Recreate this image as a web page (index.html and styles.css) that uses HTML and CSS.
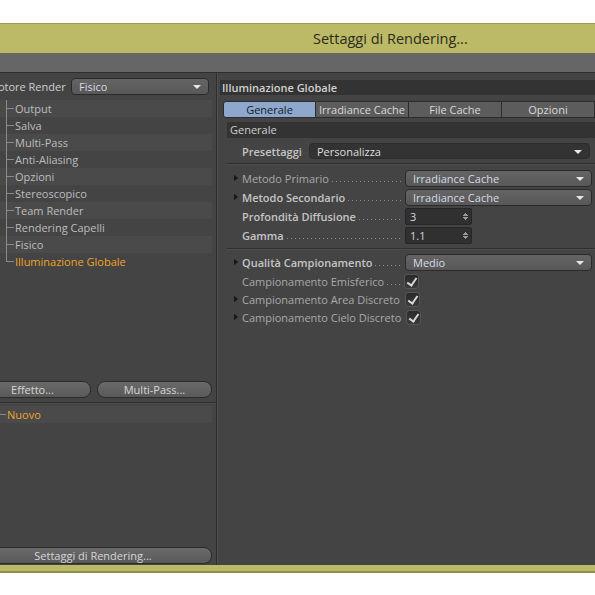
FILE: index.html
```html
<!DOCTYPE html>
<html lang="it">
<head>
    <meta charset="UTF-8">
    <title>Settaggi di Rendering</title>
    <link rel="stylesheet" href="styles.css">
</head>
<body>
    <div class="window">
        <div class="titlebar">Settaggi di Rendering...</div>
        <div class="menubar"></div>

        <div class="main">
            <!-- left column: renderer + settings tree -->
            <div class="side">
                <div class="renderer-row">
                    <span class="renderer-label">Motore Render</span>
                    <div class="dropdown dropdown-wide">Fisico</div>
                </div>

                <ul class="tree">
                    <li>Output</li>
                    <li>Salva</li>
                    <li>Multi-Pass</li>
                    <li>Anti-Aliasing</li>
                    <li>Opzioni</li>
                    <li>Stereoscopico</li>
                    <li>Team Render</li>
                    <li>Rendering Capelli</li>
                    <li>Fisico</li>
                    <li class="active last">Illuminazione Globale</li>
                </ul>

                <div class="button-row">
                    <button class="btn btn-effect">Effetto...</button>
                    <button class="btn btn-pass">Multi-Pass...</button>
                </div>

                <ul class="presets">
                    <li class="active">Nuovo</li>
                </ul>

                <button class="btn btn-full">Settaggi di Rendering...</button>
            </div>

            <!-- right column: global illumination attributes -->
            <div class="content">
                <div class="panel-title">Illuminazione Globale</div>

                <div class="tabs">
                    <div class="tab selected">Generale</div>
                    <div class="tab">Irradiance Cache</div>
                    <div class="tab">File Cache</div>
                    <div class="tab">Opzioni</div>
                </div>

                <div class="group-title">Generale</div>

                <div class="param preset-row">
                    <span class="label strong">Presettaggi</span>
                    <div class="dropdown dropdown-dark">Personalizza</div>
                </div>

                <div class="section">
                    <div class="param">
                        <span class="twist"></span>
                        <span class="label">Metodo Primario</span>
                        <span class="leader"></span>
                        <div class="control"><div class="dropdown">Irradiance Cache</div></div>
                    </div>
                    <div class="param">
                        <span class="twist"></span>
                        <span class="label strong">Metodo Secondario</span>
                        <span class="leader"></span>
                        <div class="control"><div class="dropdown">Irradiance Cache</div></div>
                    </div>
                    <div class="param">
                        <span class="label strong">Profondità Diffusione</span>
                        <span class="leader"></span>
                        <div class="control"><div class="number">3<span class="spin"></span></div></div>
                    </div>
                    <div class="param">
                        <span class="label strong">Gamma</span>
                        <span class="leader"></span>
                        <div class="control"><div class="number">1.1<span class="spin"></span></div></div>
                    </div>
                </div>

                <div class="section">
                    <div class="param">
                        <span class="twist"></span>
                        <span class="label strong">Qualità Campionamento</span>
                        <span class="leader"></span>
                        <div class="control"><div class="dropdown">Medio</div></div>
                    </div>
                    <div class="param param-check">
                        <span class="label">Campionamento Emisferico</span>
                        <span class="leader"></span>
                        <div class="control"><span class="check"></span></div>
                    </div>
                    <div class="param param-check">
                        <span class="twist"></span>
                        <span class="label">Campionamento Area Discreto</span>
                        <span class="leader"></span>
                        <div class="control"><span class="check"></span></div>
                    </div>
                    <div class="param param-check">
                        <span class="twist"></span>
                        <span class="label">Campionamento Cielo Discreto</span>
                        <span class="leader"></span>
                        <div class="control"><span class="check"></span></div>
                    </div>
                </div>
            </div>
        </div>

        <div class="bottom-edge"></div>
    </div>
</body>
</html>
```

FILE: styles.css
```css
body {
    margin: 0;
    background: #fff;
    overflow: hidden;
    font-family: "Open Sans", "Noto Sans", sans-serif;
    font-size: 11px;
}

.window {
    margin-top: 23px;
    margin-left: -12px;
    width: 607px;
}

.titlebar {
    height: 29px;
    background: #bcb967;
    border-top: 1px solid #9c9a56;
    padding-left: 325px;
    line-height: 29px;
    font-size: 14.5px;
    color: #2b2b1c;
}

.menubar {
    height: 19px;
    background: #666;
    border-bottom: 1px solid #2e2e2e;
}

.main {
    display: flex;
    height: 492px;
    background: #444;
}

.bottom-edge {
    height: 6px;
    background: #bcb967;
    border-bottom: 2px solid #8e8c48;
}

/* ---- left column ---- */

.side {
    width: 228px;
    flex: 0 0 228px;
    display: flex;
    flex-direction: column;
    padding-top: 5px;
    border-right: 1px solid #2e2e2e;
    box-shadow: 1px 0 0 #505050;
}

.renderer-row {
    display: flex;
    align-items: center;
    height: 17px;
}

.renderer-label {
    width: 82px;
    color: #cfcfcf;
}

.tree,
.presets {
    list-style: none;
    margin: 0;
    padding: 0;
}

.tree {
    margin-top: 5px;
    flex: 1;
}

.tree li,
.presets li {
    position: relative;
    height: 17px;
    line-height: 17px;
    width: 224px;
    padding-left: 27px;
    box-sizing: border-box;
    color: #bdbdbd;
}

.tree li:nth-child(odd),
.presets li {
    background: #4a4a4a;
}

/* tree connector lines */
.tree li::before {
    content: "";
    position: absolute;
    left: 18px;
    top: 0;
    width: 8px;
    height: 17px;
    border-left: 1px solid #8a8a8a;
    box-sizing: border-box;
    background: linear-gradient(#8a8a8a, #8a8a8a) no-repeat 0 8px / 8px 1px;
}

.tree li.last::before {
    height: 9px;
    background: none;
    border-bottom: 1px solid #8a8a8a;
}

.tree li.active,
.presets li.active {
    color: #f0a22a;
}

.presets {
    flex: 0 0 141px;
    box-sizing: border-box;
    padding-top: 3px;
    border-top: 1px solid #2e2e2e;
    box-shadow: inset 0 1px 0 #4c4c4c;
}

.presets li {
    padding-left: 19px;
}

.presets li::before {
    content: "";
    position: absolute;
    left: 0;
    top: 8px;
    width: 18px;
    height: 1px;
    background: #8a8a8a;
}

.button-row {
    display: flex;
    gap: 6px;
    margin-left: -14px;
    margin-bottom: 4px;
}

.btn {
    height: 17px;
    padding: 0;
    border: 1px solid #2b2b2b;
    border-radius: 8px;
    background: linear-gradient(#6a6a6a, #595959);
    color: #d6d6d6;
    font-family: inherit;
    font-size: 11px;
    line-height: 14px;
}

.btn-effect {
    width: 117px;
}

.btn-pass {
    width: 115px;
}

.btn-full {
    width: 238px;
    margin: 4px 0 1px -14px;
}

/* ---- dropdowns and fields ---- */

.dropdown {
    position: relative;
    height: 17px;
    line-height: 15px;
    padding-left: 7px;
    border: 1px solid #2a2a2a;
    border-radius: 4px;
    background: linear-gradient(#646464, #585858);
    color: #d5dbe6;
    box-sizing: border-box;
    flex: 1;
}

.dropdown::after {
    content: "";
    position: absolute;
    right: 7px;
    top: 6px;
    border-left: 4px solid transparent;
    border-right: 4px solid transparent;
    border-top: 4px solid #e8e8e8;
}

.dropdown-wide {
    flex: 0 0 138px;
    margin-left: 1px;
}

.dropdown-dark {
    height: 16px;
    background: #333;
    border-color: #2c2c2c;
    color: #dedede;
}

.control {
    flex: 0 0 187px;
    display: flex;
    align-items: center;
}

.number {
    position: relative;
    width: 67px;
    height: 17px;
    line-height: 16px;
    padding-left: 4px;
    box-sizing: border-box;
    background: #303030;
    border: 1px solid #262626;
    border-radius: 2px;
    color: #cfd6e2;
}

.spin {
    position: absolute;
    right: 3px;
    top: 3px;
    width: 5px;
    height: 9px;
    background:
        linear-gradient(to bottom right, transparent 50%, #9a9a9a 50%) no-repeat 0 0 / 3px 4px,
        linear-gradient(to bottom left, transparent 50%, #9a9a9a 50%) no-repeat 2px 0 / 3px 4px,
        linear-gradient(to top right, transparent 50%, #9a9a9a 50%) no-repeat 0 5px / 3px 4px,
        linear-gradient(to top left, transparent 50%, #9a9a9a 50%) no-repeat 2px 5px / 3px 4px;
}

.check {
    position: relative;
    width: 13px;
    height: 13px;
    border-radius: 3px;
    background: linear-gradient(#2a2a2a, #3a3a3a);
    box-shadow: 0 0 0 1px #555;
}

.check::after {
    content: "";
    position: absolute;
    left: 4px;
    top: 1px;
    width: 4px;
    height: 8px;
    border-right: 2px solid #d8d8d8;
    border-bottom: 2px solid #d8d8d8;
    transform: rotate(35deg);
}

/* ---- right column ---- */

.content {
    flex: 1;
    min-width: 0;
    overflow: hidden;
    padding-top: 7px;
    padding-left: 3px;
}

.panel-title {
    height: 15px;
    line-height: 15px;
    padding-left: 2px;
    background: #333;
    color: #d2d2d2;
    font-weight: 600;
}

.tabs {
    display: flex;
    margin: 6px 0 0 3px;
}

.tab {
    width: 93px;
    height: 17px;
    line-height: 16px;
    text-align: center;
    box-sizing: border-box;
    border: 1px solid #2c2c2c;
    border-left: none;
    background: #5c5c5c;
    color: #d8d8d8;
}

.tab.selected {
    border-left: 1px solid #2c2c2c;
    border-radius: 3px 0 0 3px;
    background: #8ea7cd;
    color: #16191f;
}

.group-title {
    height: 16px;
    line-height: 16px;
    margin: 4px 0 0 7px;
    padding-left: 3px;
    background: #333;
    color: #cfcfcf;
}

.param {
    position: relative;
    display: flex;
    align-items: center;
    height: 19px;
    padding-left: 22px;
    padding-right: 3px;
}

.preset-row {
    height: 16px;
    margin-top: 5px;
    padding-right: 5px;
}

.preset-row .label {
    width: 67px;
}

.section {
    margin: 4px 0 0 7px;
    padding-top: 5px;
    border-top: 1px solid #2f2f2f;
    box-shadow: inset 0 1px 0 #4e4e4e;
}

.section .param {
    padding-left: 15px;
}

.section + .section {
    margin-top: 3px;
    padding-top: 4px;
}

.param-check {
    height: 18px;
}

.label {
    color: #a9a9a9;
    white-space: nowrap;
}

.label.strong {
    color: #c4c4c4;
    font-weight: 600;
}

.leader {
    flex: 1;
    min-width: 0;
    align-self: stretch;
    margin: 0 3px;
    background: linear-gradient(to right, #8c8c8c 1px, transparent 1px) repeat-x 0 12px / 4px 1px;
}

.twist {
    position: absolute;
    left: 7px;
    top: 6px;
    border-top: 3px solid transparent;
    border-bottom: 3px solid transparent;
    border-left: 4px solid #151515;
}
```
